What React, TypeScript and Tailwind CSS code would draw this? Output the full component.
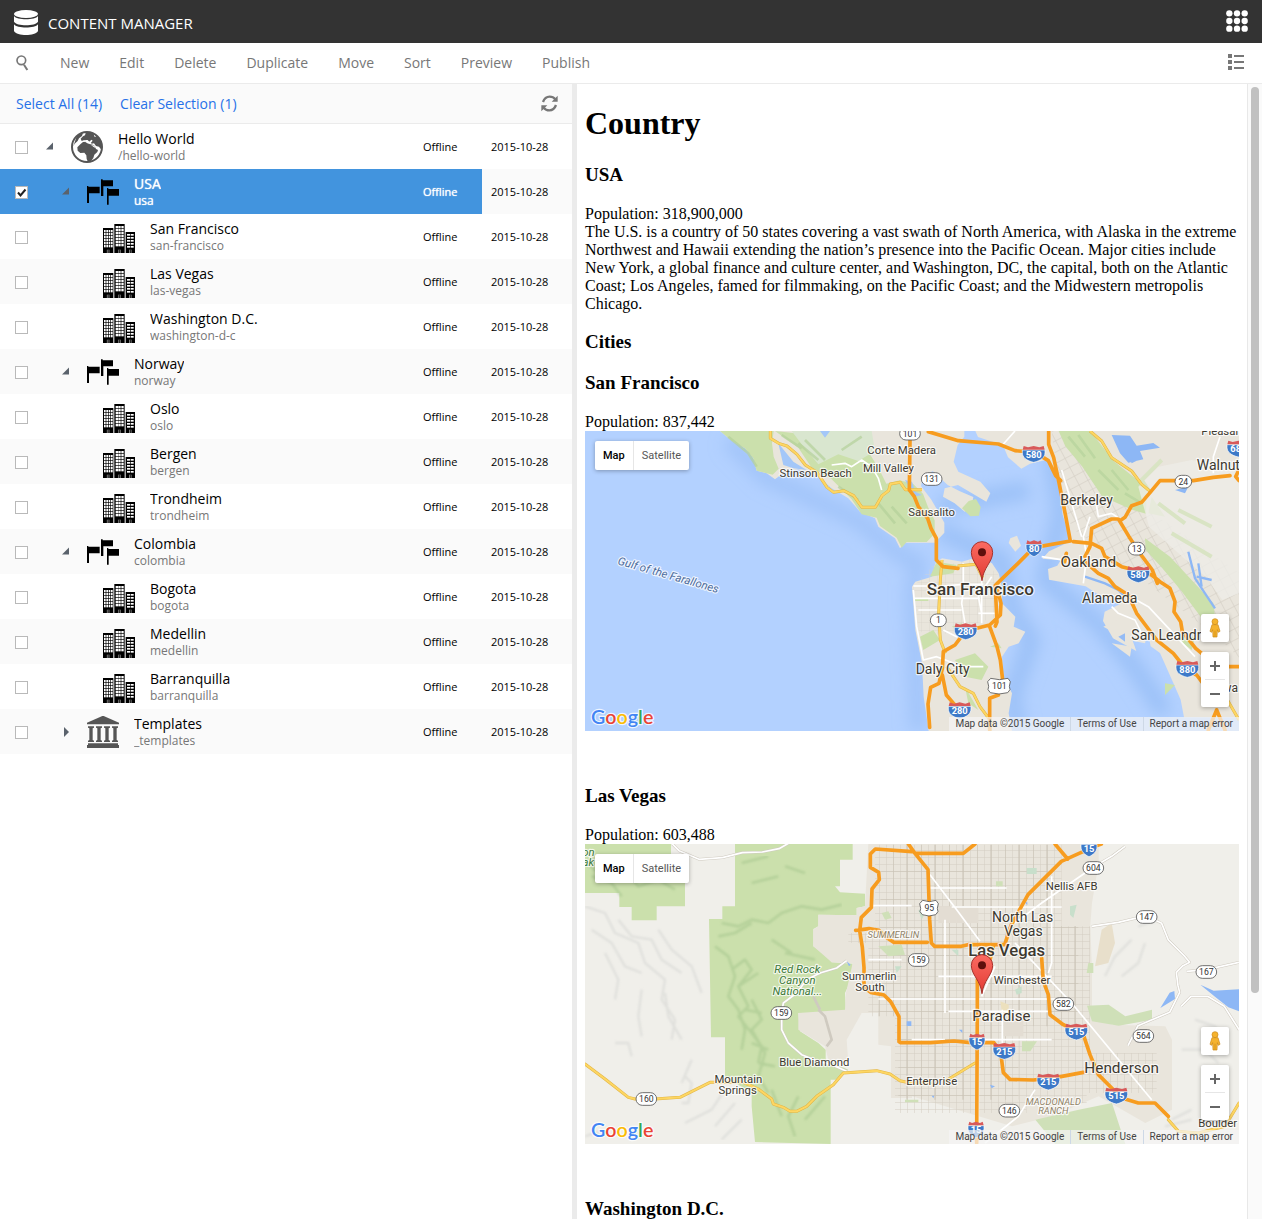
import { Fragment, type ReactNode } from "react";

type Kind = "globe" | "flags" | "city" | "library";
type Row = { name: string; slug: string; level: number; kind: Kind; arrow?: "open" | "closed"; selected?: boolean };

const rows: Row[] = [
  { name: "Hello World", slug: "/hello-world", level: 0, kind: "globe", arrow: "open" },
  { name: "USA", slug: "usa", level: 1, kind: "flags", arrow: "open", selected: true },
  { name: "San Francisco", slug: "san-francisco", level: 2, kind: "city" },
  { name: "Las Vegas", slug: "las-vegas", level: 2, kind: "city" },
  { name: "Washington D.C.", slug: "washington-d-c", level: 2, kind: "city" },
  { name: "Norway", slug: "norway", level: 1, kind: "flags", arrow: "open" },
  { name: "Oslo", slug: "oslo", level: 2, kind: "city" },
  { name: "Bergen", slug: "bergen", level: 2, kind: "city" },
  { name: "Trondheim", slug: "trondheim", level: 2, kind: "city" },
  { name: "Colombia", slug: "colombia", level: 1, kind: "flags", arrow: "open" },
  { name: "Bogota", slug: "bogota", level: 2, kind: "city" },
  { name: "Medellin", slug: "medellin", level: 2, kind: "city" },
  { name: "Barranquilla", slug: "barranquilla", level: 2, kind: "city" },
  { name: "Templates", slug: "_templates", level: 1, kind: "library", arrow: "closed" },
];

const indent = ["pl-[15px]", "pl-[31px]", "pl-[47px]"];
const actions = ["New", "Edit", "Delete", "Duplicate", "Move", "Sort", "Preview", "Publish"];

/* ---------- icons ---------- */

function Globe() {
  return (
    <svg viewBox="0 0 96 96" className="size-8" aria-hidden="true">
      <circle cx="48" cy="48" r="45" fill="#fff" />
      <g fill="#555">
        <path d="M28 40l8-7 14-1 5 7 10 2 6 4 4 9 6 3-2 6-9 8-3 10-9 12-7 0-4-9-1-11-6-8-12 1-8-7-1-10z" />
        <path d="M44 6l20 0 14 8 11 14 3 18-3 8-5-7-9-2-6-8-7 1-5-6-9 1-8-6-8 3-3-7 7-7 6-3z" />
        <path d="M17 16l10-8 9-2-3 9-9 7-4 8-9 8-4 8z" />
      </g>
      <path d="M42 27l8 0 5 5 6-6 4 3-5 6-8 3-8-4zM68 10l8 6-5 2zM60 42l10 2 4 7-5-2z" fill="#fff" />
      <circle cx="48" cy="48" r="45" fill="none" stroke="#555" strokeWidth="6" />
    </svg>
  );
}

function Flags() {
  return (
    <svg viewBox="0 0 96 96" className="size-8" aria-hidden="true">
      <path d="M42 10h5v3h31v18H49v29h-7z" />
      <path d="M0 30h4v2h34v20H6v29H0z" />
      <path d="M60 36h4v3h32v20H65v27h-5z" />
    </svg>
  );
}

function City() {
  const tower = (x: number, y: number, w: number, cols: number[], winW: number, winH: number) => {
    const windows: ReactNode[] = [];
    for (let wy = y + 6; wy + winH < 84; wy += 9) {
      for (const c of cols) windows.push(<rect key={`${c}-${wy}`} x={x + c} y={wy} width={winW} height={winH} fill="#fff" />);
    }
    return (
      <g>
        <rect x={x} y={y} width={w} height={96 - y} />
        {windows}
        <rect x={x + w / 2 - 4} y="86" width="8" height="10" fill="#777" />
        <rect x={x + w / 2 - 1} y="86" width="2" height="10" />
      </g>
    );
  };
  return (
    <svg viewBox="0 0 96 96" className="size-8" aria-hidden="true">
      {tower(0, 21, 31, [3, 10, 17, 24], 5, 7)}
      {tower(34, 9, 31, [4, 12, 21], 7, 7)}
      {tower(68, 33, 28, [4, 15], 9, 5)}
    </svg>
  );
}

function Library() {
  return (
    <svg viewBox="0 0 96 96" className="size-8" fill="#555" aria-hidden="true">
      <path d="M46 0h4l46 20v5H0v-5z" />
      {[3, 27, 51, 75].map((x) => (
        <path key={x} d={`M${x} 31h18v4l-4 2v35l4 2v4H${x}v-4l4-2V37l-4-2z`} />
      ))}
      <path d="M3 82h90v6H3zM0 87h96v9H0z" />
    </svg>
  );
}

const icons: Record<Kind, () => ReactNode> = { globe: Globe, flags: Flags, city: City, library: Library };

function Refresh() {
  return (
    <svg viewBox="0 0 51 51" className="size-[17px]" fill="none" stroke="#777" strokeWidth="7" aria-hidden="true">
      <path d="M6 21C10 10 18 5 26 5c7 0 13 3 17 8" />
      <path d="M45 30C41 41 33 46 25 46c-7 0-13-3-17-8" />
      <path d="M50 2v18H32zM1 49V31h18z" fill="#777" stroke="none" />
    </svg>
  );
}

/* ---------- map pieces: map units are a third of a pixel ---------- */

type LabelProps = { x: number; y: number; size?: number; children: ReactNode; fill?: string; italic?: boolean; bold?: boolean; turn?: number };
function Label({ x, y, size = 34, children, fill = "#3d3930", italic, bold, turn }: LabelProps) {
  return (
    <text
      x={x} y={y} fontSize={size} fill={fill} textAnchor="middle" stroke="#fff" strokeOpacity="0.75" strokeWidth="7"
      strokeLinejoin="round" paintOrder="stroke" fontStyle={italic ? "italic" : undefined} fontWeight={bold ? 500 : 400}
      transform={turn ? `rotate(${turn} ${x} ${y})` : undefined}
    >
      {children}
    </text>
  );
}

function Interstate({ x, y, n }: { x: number; y: number; n: string }) {
  const w = n.length > 2 ? 34 : 24;
  return (
    <g transform={`translate(${x} ${y})`}>
      <path d={`M${-w} -12V-4C${-w} 10 ${-w + 12} 20 0 25C${w - 12} 20 ${w} 10 ${w} -4V-12z`} fill="#3d79c8" stroke="#fff" strokeWidth="2" />
      <path d={`M${-w + 1} -13l3 -11 ${w / 2 - 4} 4 ${w / 2} -4 ${w / 2} 4 ${w / 2 - 4} -4 3 11z`} fill="#d85a5a" />
      <text y="11" textAnchor="middle" fontSize="28" fontWeight="700" fill="#fff">{n}</text>
    </g>
  );
}

function Shield({ x, y, n, us }: { x: number; y: number; n: string; us?: boolean }) {
  const w = n.length === 1 ? 24 : n.length === 2 ? 25 : 31;
  return (
    <g transform={`translate(${x} ${y})`}>
      {us ? (
        <path d={`M${-w + 5} -22l${w - 5} 4 ${w - 5} -4 7 10 -3 14 2 10 -7 9 -${w - 5} 4 -${w - 5} -4 -7 -9 2 -10 -3 -14z`} fill="#fff" stroke="#555" strokeWidth="2.5" />
      ) : (
        <rect x={-w} y="-19" width={w * 2} height="38" rx="19" fill="#fff" stroke="#555" strokeWidth="2.5" />
      )}
      <text y="9" textAnchor="middle" fontSize="26" fill="#333">{n}</text>
    </g>
  );
}

function Pin() {
  return (
    <g transform="translate(1191 452)">
      <defs>
        <linearGradient id="pin" x1="0" y1="0" x2="0" y2="1">
          <stop offset="0" stopColor="#fb6b62" />
          <stop offset="1" stopColor="#e23b33" />
        </linearGradient>
      </defs>
      <path d="M0 0C-4 -40 -32 -56 -32 -85A32 32 0 0 1 32 -85C32 -56 4 -40 0 0z" fill="url(#pin)" stroke="#a8322c" strokeWidth="3" />
      <circle cy="-85" r="12" fill="#5e0f0c" />
    </g>
  );
}

function GoogleLogo() {
  const letters = [["G", "#4285f4"], ["o", "#ea4335"], ["o", "#fbbc05"], ["g", "#4285f4"], ["l", "#34a853"], ["e", "#ea4335"]];
  return (
    <text x="18" y="881" fontSize="59" fontWeight="600" fontFamily="Lato, sans-serif" stroke="#fff" strokeOpacity="0.8" strokeWidth="7" paintOrder="stroke">
      {letters.map(([l, c], i) => <tspan key={i} fill={c}>{l}</tspan>)}
    </text>
  );
}

function SanFranciscoMap() {
  return (
    <>
      <defs>
        <pattern id="sfgrid" width="30" height="30" patternUnits="userSpaceOnUse" patternTransform="rotate(-28)">
          <path d="M0 0H30M0 0V30" stroke="#d0cabf" strokeWidth="3" fill="none" />
        </pattern>
        <pattern id="sfstreets" width="24" height="24" patternUnits="userSpaceOnUse">
          <path d="M0 0H24M0 0V24" stroke="#d8d2c8" strokeWidth="2" fill="none" />
        </pattern>
        <filter id="soft" x="-20%" y="-20%" width="140%" height="140%"><feGaussianBlur stdDeviation="24" /></filter>
      </defs>
      <rect y="3" width="1962" height="900" fill="#b3d1ff" />
      <g fill="none" stroke="#94bbf5" strokeWidth="50" filter="url(#soft)">
        <path opacity="0.6" d="M430 30L540 140 820 270 940 370 1000 400 985 480 1000 903" />
        <path opacity="0.8" d="M1060 300L1250 390 1280 540 1340 630 1280 800 1300 903M1400 60L1430 250 1380 450 1540 580 1640 700 1740 850M1060 230L1330 180" />
      </g>
      {/* Marin */}
      <path d="M405 3l35 29 40 23 25 30 10 37 30 8 25 18 30-23 40-7 60 22 40 35 50 30 35 40 45 20 10 25 50 35 15 30 15-17 36 0 54 0 28-30 0-30-25-45-15-25-30-40 5-25 30-20 45 42 35 18 42 18-5 30-21 14-30-25-35-20 5-25 40-10 85 50 12-25-30-35-66-30-14-30 12-50 20-25V3z" fill="#e9e5dc" />
      <path d="M405 3l35 29 40 23 25 30 10 37 30 8 18 4 18-18-15-36-5-40 5-37zM570 3l70 50 40 60 60 35 60 60 30 45 45 10 10 25 50 35 15 30 15-17 60 0 24-25 0-40-20-40-15-40-30-30-40-10-40 10-20-40-30-50-60-40-60-10z" fill="#cbe0ac" />
      <path d="M620 3h240l10 60-50 30-60-20-60 30-50-60z" fill="#d9e6cf" />
      <path d="M580 40l45 55 40 25-40-5-30-10zM705 3l30 0-15 20zM960 150l21 5 10 30 20 10-25 5z" fill="#a3c7f8" />
      <path d="M430 20l60 50 25 40M640 40l60 50M660 30l60 60M590 15l60 40M760 170l60 40M880 220l50 60M920 230l45 50M770 60l60-40" stroke="#b3d09a" strokeWidth="8" fill="none" opacity="0.7" />
      <path d="M1131 235l20-22 22-6 14 24-5 26-26 2z" fill="#cbe0ac" />
      {/* East bay */}
      <path d="M1171 3l8 18 75 25 15 36 40 34 26-15 50-12 22 30 18 65 8 70 15 50 12 28-68 32-20 22 55 5-10 16-28 10 3 32 110 20 40 26 62 28-45 22-5 28 30 52 70 38-12-34 50-5 5 25 28 20 40 90 22 50 10 53h182V3z" fill="#e9e5dc" />
      <path d="M1400 3l10 80 18 65 8 70 15 50 12 28 140 100 300 230 62 60V430L1690 240 1570 110 1450 3z" fill="url(#sfgrid)" />
      <path d="M1421 3h95l70 90 100 80-3 78-42-12-90-40-60-90-50-60zM1680 325l75 55 60 65 70 75 10 80-48-40-60-80-55-65-50-55zM1690 250l10-50 40 60zM1770 620h60l-10 40zM1740 760l30 5-30 30z" fill="#cbe0ac" />
      <path d="M1450 20l50 60M1480 15l50 70M1540 120l60 60M1580 120l50 60M1620 190l50 30" stroke="#b3d09a" strokeWidth="8" fill="none" opacity="0.6" />
      <path d="M1660 170l60-60 100-20 120 20 22 40v340l-50 20-50-70-70-60-100-90z" fill="#eeece7" opacity="0.8" />
      <path d="M1690 180l-20-30 60-60M1720 220l80 60M1780 240l100 50M1760 310l120 70" fill="none" stroke="#d9e4c4" strokeWidth="12" />
      <path d="M1580 15l25 55 25 28 45-10-10-25 60-10-20-14-50 8-20-30zM1630 75l10 25 30-15M1770 180l40-10-10 20z" fill="#8db7f5" />
      <path d="M1810 365l20 80 40 60 20 30M1835 440l45 10M1850 470l-10-70M1500 440l60 20 40 20 20 20" fill="none" stroke="#8db7f5" strokeWidth="7" />
      <path d="M1276 325l20-8 12 30-17 18-20-26z" fill="#e9e5dc" />
      <path d="M1555 590l80-40 60 30-15 60-50-10zM1580 640l60 10-5 30z" fill="#e9e5dc" />
      <path d="M1600 620l20-10 0 25z" fill="#94bbf5" />
      {/* Peninsula */}
      <path d="M1051 400l20-15 60 10 50-15 40 20 20 30 10 40v50l40 40-5 30 35 15-20 35-30 10-20 30 5 60 25 50-10 60 10 53h-250l-15-103-5-100-20-100-10-130 10-15 50-15z" fill="#e9e5dc" />
      <path d="M985 470l66-70 60 0 70-15 60 50 10 90 0 30-180 60-70-10z" fill="url(#sfstreets)" />
      <path d="M1035 440l20-45 60 10-10 25zM1110 690l60-20 40 40-20 40-50-10zM1005 620l40-20 20 30-50 30zM1140 770l40 70-30-20zM990 505h40v8h-40zM1100 590l30-10 0 20zM1215 650l25-10 10 15z" fill="#cbe0ac" />
      <g fill="none" stroke="#fff" strokeWidth="5" strokeLinejoin="round">
        <path d="M985 468h90l60-5 60 0M985 505h200M1000 540h70l60 0M1180 550h60M1135 400v80l-5 40 10 60M1190 400v180M1220 440l-40 60 10 50M985 480l10 110 20 100 40-10 80 30 60 0M1075 600l40 20 30-10M740 105l40-5 20 10 30-20 30 20 20 35 10 35" />
        <path d="M1430 120l60 200M1515 260l-20 60 10 60-10 80M1530 200l10 60 40-10 30 20M1600 480l90 50 140 150M1580 530l20 20 50 20 20 40M1370 380l130 20M1290 3l-40 45M1905 20l-20 60 0 50" />
      </g>
      <g fill="none" stroke="#e2b544" strokeWidth="9" strokeLinejoin="round">
        <path d="M556 3v22l25 15 25 8 30 25 25 32 35 22 30 45 20 15 30-5 30 15 25 35h40l20-35 20-15 5-20 30-5 15 22 50 0M1515 3l35 30 30 50 60 40 30 40 30 25M1071 390l-5 60-5 100 5 80 15 40M1085 710l40 60 40 20 20 40 30 40v33M1118 408l55-5 20 40M1910 780l52 90" />
        <path d="M556 3v22l25 15 25 8 30 25 25 32 35 22 30 45 20 15 30-5 30 15 25 35h40l20-35 20-15 5-20 30-5 15 22 50 0M1515 3l35 30 30 50 60 40 30 40 30 25M1071 390l-5 60-5 100 5 80 15 40M1085 710l40 60 40 20 20 40 30 40v33M1118 408l55-5 20 40M1910 780l52 90" stroke="#fdd663" strokeWidth="6" />
      </g>
      <g fill="none" stroke="#f79c1f" strokeWidth="11" strokeLinejoin="round" strokeLinecap="round">
        <path d="M975 30l-2 150 15 20 12 30 28 35 10 30 16 30 0 65 20 20 45 5" />
        <path d="M1030 5l90 27 120 10 50 20 60 5 40 25 22 45 15 15M1391 3v40l15 40 15 70 20 100 15 80-110 20-50 50-50 48-15 15 2 50 3 60-5 12M1238 480l10 40-2 35-32 30-60 15M1214 590l22 60 10 40 7 60" />
        <path d="M1125 625l-15 20-35 20-3 50-10 45-25 12-8 50 5 70M1072 735l12 60 30 35M1240 795l-26 10 0 95" />
        <path d="M1465 335l55 5 30 15 10 25 50 30 60 15 30 10 25 20 30 20 15 40-3 30 20 30 5 30 40 50 30 25M1500 380l15-30 5-55 60-28 20 0 5 5 15-10 20-35 30-10 30-35 25-30h60l40 0 60-10 50-5M1602 270l30 50 40 60 30 40 15 40M1500 395l40 35 30 15 20 25 40 25 25 55 60 80 50 40 40 50 30 15 30 40M1860 710h102M1895 840l25 60M1895 840l-25 60M1962 120l-10 20 10 12M1444 370l-5 25" />
      </g>
      <Interstate x={1346} y={72} n="580" /><Interstate x={1347} y={355} n="80" /><Interstate x={1660} y={433} n="580" />
      <Interstate x={1142} y={604} n="280" /><Interstate x={1124} y={841} n="280" /><Interstate x={1807} y={717} n="880" /><Interstate x={1960} y={56} n="680" />
      <Shield x={975} y={11} n="101" /><Shield x={1040} y={147} n="131" /><Shield x={1795} y={155} n="24" /><Shield x={1655} y={356} n="13" />
      <Shield x={1060} y={571} n="1" /><Shield x={1243} y={767} n="101" us />
      <Label x={692} y={140}>Stinson Beach</Label><Label x={950} y={71}>Corte Madera</Label><Label x={910} y={125}>Mill Valley</Label>
      <Label x={1040} y={258}>Sausalito</Label><Label x={1505} y={224} size={42}>Berkeley</Label><Label x={1510} y={411} size={46}>Oakland</Label>
      <Label x={1186} y={494} size={51} bold>San Francisco</Label><Label x={1574} y={519} size={42}>Alameda</Label><Label x={1756} y={630} size={42}>San Leandro</Label>
      <Label x={1073} y={732} size={42}>Daly City</Label><Label x={1900} y={120} size={42}>Walnut</Label><Label x={1915} y={14}>Pleasant</Label><Label x={1905} y={785} size={36}>Haywa</Label>
      <Label x={247} y={446} italic fill="#4c6c9c" turn={16}>Gulf of the Farallones</Label>
    </>
  );
}

function LasVegasMap() {
  return (
    <>
      <defs>
        <pattern id="lvgrid" width="21" height="21" patternUnits="userSpaceOnUse">
          <path d="M0 0H21M0 0V21" stroke="#d4cdc1" strokeWidth="3" fill="none" />
        </pattern>
        <pattern id="lvblocks" width="84" height="84" patternUnits="userSpaceOnUse">
          <path d="M0 0H84M0 0V84M42 0V84" stroke="#c8c1b4" strokeWidth="3" fill="none" />
        </pattern>
        <filter id="relief" x="0" y="0" width="100%" height="100%"><feGaussianBlur stdDeviation="3" /></filter>
      </defs>
      <rect y="3" width="1962" height="900" fill="#f0efea" />
      <path d="M0 3h258v32h42v155h-85v42h-75v-40h-37v-42H0zM450 3h353v47h-38v80h-15l15 18 75 4v38l-25 5v22l-115-2v35l-15 8v52l35 25 20 23 63 4v38l-23 50 3 60h-143l5 55 55 35 22 20v30l68 30-35 30h-18v193l-227-6-10-107v-40l-80-50V583h-42l-6-355h40v-38h38z" fill="#cbe0ac" />
      <g fill="none" stroke="#a3c48b" strokeWidth="8" opacity="0.55" filter="url(#relief)" strokeLinejoin="round">
        <path d="M410 240l50 10 40-20 50 10 40-30 60-20 60 10 60-15M400 280l50-10 50-30M390 310l40 30 20 60-20 60 30 40 20 60-10 60M440 380l40-30 20 30-40 50 30 60-30 30 40 50 30 40-10 50M500 470l30 60-30 30 40 70-20 70 30 50M460 430l60-40M480 500l50 10M500 600l50 20M520 660l50 10M560 740l30 80M640 760l-30 60 20 60M660 830l60-70M470 60l80-20M500 120l80-20M600 70l60 20M600 330l90 20M560 290l60 40M0 60l60 40 60-20 40 50 60-20 50 30M20 100l60 20 30 40M140 60l60 40 60-20" />
      </g>
      <g fill="none" stroke="#d5d6d3" strokeWidth="7" opacity="0.6" filter="url(#relief)" strokeLinejoin="round">
        <path d="M0 190l60 20 30 60 70 30 20 60 60 50-10 60 40 60-10 60M20 260l60 40 40 70 50 20M100 230l40 50 60 10 30 60 60 40M60 330l40 80-10 60M220 260l40 60 60 50 30 80M170 440l-10 80 10 60M90 600l40 0 10 40M240 450l10 70 40 70M300 700l20 20-10 60-20 0M320 650l-30 70M420 740l-40 60-80 40M450 780l-60 70M470 830l-60 60" />
        <path d="M1640 290l-50 50-30 60M1680 300l-20 60-50 40M1720 230l-60 20M1580 300l-30 60M1790 620l70 0 40 40M1830 530l60 20 40 60M1740 850l80-20M1820 800l-60 30M0 880l60-20" />
      </g>
      <path d="M850 3h131v762h-63V610l-38-5v-95l-50 0-45 80 5 70-60-10-10-40-80-50v-50l140-10 3-50 20-90-63-2-55-48v-50l15-10v-35l115 2v-22l25-5z" fill="#e9e5dc" />
      <path d="M980 3h561v57l-20 120-5 65 5 145v100l60 55 160 5 20 40v210l-80 40-140-80-140 60-120 30-300-90z" fill="#e9e5dc" />
      <path d="M870 5h560v245h85v380h200v120h-210v30h-180v30H930V520h-80V300h-60v-30h80z" fill="url(#lvgrid)" />
      <path d="M890 5h500v245h90v300h-180v220H940V520h-60z" fill="url(#lvblocks)" />
      <path d="M1060 190h120v50h-120zM1255 520h60v60h-60z" fill="#e3ddd3" />
      <path d="M700 500l20 20 20 70-15 20M685 460l20 40" stroke="#cfcac0" strokeWidth="8" fill="none" />
      <path d="M1506 488l65-3 50 35 80-20v30l-100 18-80-13zM1351 830l130-30 100-20 40 123h-210zM1233 115h20v15h-20zM1311 595l45 0-20 30h-25zM960 770h40v8h-40zM1510 360h15v30h-20zM890 210l20-5 10 20-20 5zM880 310l70-5 10 30-50 5z" fill="#cfe0b8" />
      <path d="M1325 75h30v18h-30zM1455 190l20-5-10 40-10-10zM1290 440l20-10 0 20-15 5zM1100 320h20v20zM930 370l20 0-15 20zM1000 200l20 10-10 20z" fill="#c8dfcb" />
      <path d="M1550 260l30-20 10 60-20 60-40 10z" fill="#e8dfcb" />
      <path d="M1246 475l25 10v30l-20-5z" fill="#ece0bd" />
      <path d="M1846 425l40 18 76-4v66l-32-12-40-32zM1726 495l28-46 14-5 2 24zM965 535h14v14h-14zM785 355l12 10-5 5zM1319 178l8 0 0 8zM1122 560l10 0 0 10zM1215 725l15 5-10 6zM1040 758l8 0-3 8z" fill="#8db7f5" />
      <g fill="none" stroke="#cfcac0" strokeWidth="8" strokeLinejoin="round">
        <path d="M262 3l20 20 60 26 70-5 60-15 60-2 50-10 30-17M785 353l-30 22-50 15-40 20-30 40-40 30-5 30 0 50 20 40 40 35 50 20 40 10 45 20M1520 250l80-12 50-12 40-5 40 20 20 50 50 50 14 17-20 10-20 20 5 40 5 20-30 60-60 25-35 15-30 60M1788 490l30-30 50 0 50 30 44 70M1620 10l-40 30-60 35M1805 385l60-5 97-22" />
        <path d="M262 3l20 20 60 26 70-5 60-15 60-2 50-10 30-17M785 353l-30 22-50 15-40 20-30 40-40 30-5 30 0 50 20 40 40 35 50 20 40 10 45 20M1520 250l80-12 50-12 40-5 40 20 20 50 50 50 14 17-20 10-20 20 5 40 5 20-30 60-60 25-35 15-30 60M1788 490l30-30 50 0 50 30 44 70M1620 10l-40 30-60 35M1805 385l60-5 97-22" stroke="#fff" strokeWidth="5" />
      </g>
      <g fill="none" stroke="#fff" strokeWidth="5">
        <path d="M1035 95l80 105 70 95M1500 90l-130 90-80 60M1290 300l170 180 240 290M1190 460l40-90M1035 135h230M860 188h120M1100 192h330M850 350h100M880 468h560M1180 470v370M1400 100v260l-10 30M980 590l100 0M1060 400h340M1200 900l100-80 50-80M1090 505h300M1252 500v100M1080 230v280M1200 590h200" />
      </g>
      <g fill="none" strokeLinejoin="round" strokeLinecap="round">
        <path d="M0 663l60 45 70 55 20 5 60 0 75-5 90-45h60l40 0 45 20 40 30 5 15 30 10 20 12h20l30-15 30-30 50-35 30-35 100-7 40 10 30 20 30 7h60M1080 715l90-55M1750 830l30 35 60 5 80-20 42-70" stroke="#e2b544" strokeWidth="9" />
        <path d="M0 663l60 45 70 55 20 5 60 0 75-5 90-45h60l40 0 45 20 40 30 5 15 30 10 20 12h20l30-15 30-30 50-35 30-35 100-7 40 10 30 20 30 7h60M1080 715l90-55M1750 830l30 35 60 5 80-20 42-70" stroke="#fdd663" strokeWidth="6" />
        <path d="M981 26l-110-8-15 15 0 40 25 15 2 22-22 28-2 55-30 30-5 40 8 50 5 60 0 60 20 15 40 8 20 20 25 45v75l5 3h90l70-5 50 5 70 0 20 30 8 60 20 20 70 2 70-8 80-15M812 262l40-5 30 5 20 20 25 16h100M981 20l48 60 5 150 5 70 10 10h80l20-5 110 0 20-60 50-90 100-100 100-45 20-7M970 3l20 28h145l35-28M1410 3l38 45M1225 310l-15 60M1177 410v90l-2 400M1370 345l5 70 15 40 5 60 40 30 60 30 20 60 25 60 70 70 50 15h50l40 40" stroke="#f79c1f" strokeWidth="11" />
      </g>
      <Interstate x={1512} y={16} n="15" /><Interstate x={1176} y={596} n="15" /><Interstate x={1258} y={624} n="215" /><Interstate x={1390} y={716} n="215" />
      <Interstate x={1474} y={566} n="515" /><Interstate x={1594} y={758} n="515" /><Interstate x={1173} y={860} n="15" />
      <Shield x={1033} y={194} n="95" us /><Shield x={1525} y={75} n="604" /><Shield x={1685} y={222} n="147" /><Shield x={1864} y={387} n="167" />
      <Shield x={1001} y={351} n="159" /><Shield x={1435} y={483} n="582" /><Shield x={1675} y={579} n="564" /><Shield x={1273} y={803} n="146" />
      <Shield x={589} y={510} n="159" /><Shield x={184} y={768} n="160" />
      <Label x={10} y={38} italic fill="#3d7a3a">on</Label><Label x={10} y={70} italic fill="#3d7a3a">ak</Label>
      <Label x={637} y={391} italic fill="#3d7a3a">Red Rock</Label><Label x={637} y={424} italic fill="#3d7a3a">Canyon</Label><Label x={637} y={457} italic fill="#3d7a3a">National...</Label>
      <Label x={853} y={410}>Summerlin</Label><Label x={855} y={443}>South</Label><Label x={925} y={284} size={28} italic fill="#8f8266">SUMMERLIN</Label>
      <Label x={688} y={668}>Blue Diamond</Label><Label x={460} y={719}>Mountain</Label><Label x={458} y={752}>Springs</Label>
      <Label x={1460} y={140}>Nellis AFB</Label><Label x={1313} y={236} size={42}>North Las</Label><Label x={1315} y={279} size={42}>Vegas</Label>
      <Label x={1265} y={339} size={50} bold>Las Vegas</Label><Label x={1311} y={423}>Winchester</Label><Label x={1249} y={535} size={45}>Paradise</Label>
      <Label x={1610} y={691} size={46}>Henderson</Label><Label x={1040} y={725}>Enterprise</Label>
      <Label x={1405} y={785} size={28} italic fill="#8f8266">MACDONALD</Label><Label x={1405} y={812} size={28} italic fill="#8f8266">RANCH</Label>
      <Label x={1898} y={851}>Boulder</Label>
    </>
  );
}

function MapFrame({ label, children }: { label: string; children: ReactNode }) {
  const link = "flex h-3.5 items-center border-l border-[#cdd8e6] bg-[#f5f5f5]/70 px-1.5 first:border-l-0";
  return (
    <div className="relative h-[300px] w-full overflow-hidden font-[Roboto,sans-serif]">
      <svg viewBox="0 3 1962 900" preserveAspectRatio="xMidYMid slice" className="block h-full w-full" role="img" aria-label={label}>
        {children}
        <Pin />
        <GoogleLogo />
      </svg>
      <div className="absolute top-2.5 left-2.5 flex h-[29px] rounded-xs bg-white text-[11px] shadow-[0_1px_4px_rgba(0,0,0,0.3)]">
        <button type="button" className="border-r border-[#e6e6e6] px-2 font-medium text-black">Map</button>
        <button type="button" className="px-2 text-[#565656]">Satellite</button>
      </div>
      <div className="absolute right-2.5 bottom-6 flex flex-col gap-2.5">
        <button type="button" aria-label="Street view" className="flex size-7 items-center justify-center rounded-xs bg-white shadow-[0_1px_4px_rgba(0,0,0,0.3)]">
          <svg viewBox="0 0 36 60" className="h-5 w-3" fill="#f5b32e" stroke="#c98513" strokeWidth="2">
            <path d="M9 20h18l6 20-5 3-3-8-1 22H12l-1-22-3 8-5-3z" />
            <path d="M18 38v18" />
            <circle cx="18" cy="11" r="9" />
          </svg>
        </button>
        <div className="flex w-7 flex-col rounded-xs bg-white shadow-[0_1px_4px_rgba(0,0,0,0.3)]">
          <button type="button" aria-label="Zoom in" className="flex h-[27px] items-center justify-center">
            <svg viewBox="0 0 10 10" className="size-2.5"><path d="M0 5h10M5 0v10" stroke="#666" strokeWidth="2" /></svg>
          </button>
          <div className="mx-1 h-px bg-[#e6e6e6]" />
          <button type="button" aria-label="Zoom out" className="flex h-[27px] items-center justify-center">
            <svg viewBox="0 0 10 10" className="size-2.5"><path d="M0 5h10" stroke="#666" strokeWidth="2" /></svg>
          </button>
        </div>
      </div>
      <div className="absolute right-0 bottom-0 flex text-[10px] whitespace-nowrap text-[#444]">
        <span className={link}>Map data ©2015 Google</span>
        <a href="#terms" className={link}>Terms of Use</a>
        <a href="#report" className={link}>Report a map error</a>
      </div>
    </div>
  );
}

/* ---------- page ---------- */

function ContentTree() {
  return (
    <table className="w-full table-fixed border-collapse">
      <colgroup>
        <col />
        <col className="w-[74px]" />
        <col className="w-[90px]" />
      </colgroup>
      <tbody>
        {rows.map((r) => {
          const Icon = icons[r.kind];
          const sel = r.selected;
          return (
            <tr key={r.slug} className="h-[45px] even:bg-[#fafafa]">
              <td className={sel ? "bg-[#4294de] p-0" : "p-0"}>
                <div className="flex items-center pl-[15px]">
                  <span className="relative mt-0.5 flex size-[13px] shrink-0">
                    <input type="checkbox" defaultChecked={sel} aria-label={`Select ${r.name}`} className="size-[13px] appearance-none border border-[#b9b9b9] bg-white" />
                    {sel && (
                      <svg viewBox="0 0 13 13" className="pointer-events-none absolute inset-0 size-[13px]"><path d="M3 6.5l2.500 3L10.500 3.500" fill="none" stroke="#222" strokeWidth="2" /></svg>
                    )}
                  </span>
                  <div className={`flex min-w-0 items-center ${indent[r.level]}`}>
                    <span className="flex w-7 shrink-0 pl-0.5">
                      {r.arrow && (
                        <button type="button" aria-label={r.arrow === "open" ? "Collapse" : "Expand"}>
                          <svg viewBox="0 0 8 10" className="h-2.5 w-2" fill="#5a626c"><path d={r.arrow === "open" ? "M8 0.500V7.500H1z" : "M3 0L8 5 3 10z"} /></svg>
                        </button>
                      )}
                    </span>
                    <Icon />
                    <div className="ml-[15px] min-w-0">
                      <div className={`truncate text-sm leading-[18px] ${sel ? "text-white [text-shadow:0_0_1px_white]" : "text-black"}`}>{r.name}</div>
                      <div className={`truncate text-xs leading-[15px] ${sel ? "text-white [text-shadow:0_0_1px_white]" : "text-[#777]"}`}>{r.slug}</div>
                    </div>
                  </div>
                </div>
              </td>
              <td className={`p-0 pt-0.5 pl-[15px] text-[11px] ${sel ? "bg-[#4294de] text-white [text-shadow:0_0_1px_white]" : ""}`}>Offline</td>
              <td className="p-0 pt-0.5 pl-[9px] text-[11px]">2015-10-28</td>
            </tr>
          );
        })}
      </tbody>
    </table>
  );
}

export default function App() {
  return (
    <div className="flex h-screen flex-col overflow-hidden bg-white font-['Open_Sans',sans-serif] text-black">
      <header className="flex h-[43px] shrink-0 items-center bg-[#333] px-3.5 pt-0.5 text-white">
        <svg viewBox="0 0 72 75" className="mr-2.5 h-[25px] w-6" fill="#fff" aria-hidden="true">
          <ellipse cx="36" cy="12" rx="36" ry="12" />
          <path d="M0 18c8 13 64 13 72 0v17c-8 14-64 14-72 0z" />
          <path d="M0 43c8 13 64 13 72 0v20c-8 16-64 16-72 0z" />
        </svg>
        <h1 className="pt-0.5 text-[15px] font-normal">CONTENT MANAGER</h1>
        <button type="button" aria-label="Applications" className="mb-1 ml-auto">
          <svg viewBox="0 0 66 66" className="size-[22px]" fill="#fff">
            {[10, 33, 56].map((y) => <Fragment key={y}>{[10, 33, 56].map((x) => <circle key={x} cx={x} cy={y} r="9.500" />)}</Fragment>)}
          </svg>
        </button>
      </header>

      <nav className="flex h-[41px] shrink-0 items-center border-b border-[#ebebeb] px-[15px] text-sm text-[#777]">
        <button type="button" aria-label="Search" className="mr-[31px]">
          <svg viewBox="0 0 42 48" className="h-4 w-3.5" fill="none" stroke="#777">
            <circle cx="19" cy="16" r="13" strokeWidth="5" />
            <path d="M27 29l10 16" strokeWidth="6" />
          </svg>
        </button>
        <div className="flex gap-[30px]">
          {actions.map((a) => <button key={a} type="button">{a}</button>)}
        </div>
        <button type="button" aria-label="Toggle details" className="mr-[3px] mb-0.5 ml-auto">
          <svg viewBox="0 0 48 48" className="size-4" fill="#777">
            <path d="M0 0h12v12H0zM18 3h30v6H18zM0 18h12v12H0zM18 21h30v6H18zM0 36h12v12H0zM18 39h30v6H18z" />
          </svg>
        </button>
      </nav>

      <main className="flex min-h-0 flex-1">
        <section className="flex min-w-0 flex-[572_1_0%] flex-col">
          <div className="flex h-10 shrink-0 items-center gap-[18px] border-b border-[#ebebeb] bg-[#fafafa] pr-3.5 pl-4 text-sm text-[#2671e8]">
            <button type="button">Select All (14)</button>
            <button type="button">Clear Selection (1)</button>
            <button type="button" aria-label="Refresh" className="ml-auto"><Refresh /></button>
          </div>
          <ContentTree />
        </section>
        <div className="w-[5px] shrink-0 bg-[#ebebeb]" />
        <section className="flex min-w-0 flex-[685_1_0%]">
          <article className="min-w-0 flex-1 overflow-hidden px-2 font-['Liberation_Serif',serif] text-base leading-[18px]">
            <h1 className="mt-[21px] text-[32px] leading-[37px] font-bold">Country</h1>
            <h3 className="mt-[22px] mb-[19px] text-[19px] leading-[22px] font-bold">USA</h3>
            <p>Population: 318,900,000</p>
            <p>
              The U.S. is a country of 50 states covering a vast swath of North America, with Alaska in the extreme Northwest and Hawaii extending the nation’s presence into the Pacific Ocean. Major cities include New York, a global finance and culture center, and Washington, DC, the capital, both on the Atlantic Coast; Los Angeles, famed for filmmaking, on the Pacific Coast; and the Midwestern metropolis Chicago.
            </p>
            <h3 className="mt-[18px] mb-[19px] text-[19px] leading-[22px] font-bold">Cities</h3>
            <h3 className="my-[19px] text-[19px] leading-[22px] font-bold">San Francisco</h3>
            <p>Population: 837,442</p>
            <MapFrame label="Map of San Francisco"><SanFranciscoMap /></MapFrame>
            <h3 className="mt-[54px] mb-[19px] text-[19px] leading-[22px] font-bold">Las Vegas</h3>
            <p>Population: 603,488</p>
            <MapFrame label="Map of Las Vegas"><LasVegasMap /></MapFrame>
            <h3 className="mt-[54px] mb-[19px] text-[19px] leading-[22px] font-bold">Washington D.C.</h3>
          </article>
          <div className="flex w-[15px] shrink-0 justify-center border-l border-[#e8e8e8] bg-[#fafafa] pt-[3px]">
            <div className="h-4/5 w-2 rounded-full bg-[#c1c1c1]" />
          </div>
        </section>
      </main>
    </div>
  );
}
